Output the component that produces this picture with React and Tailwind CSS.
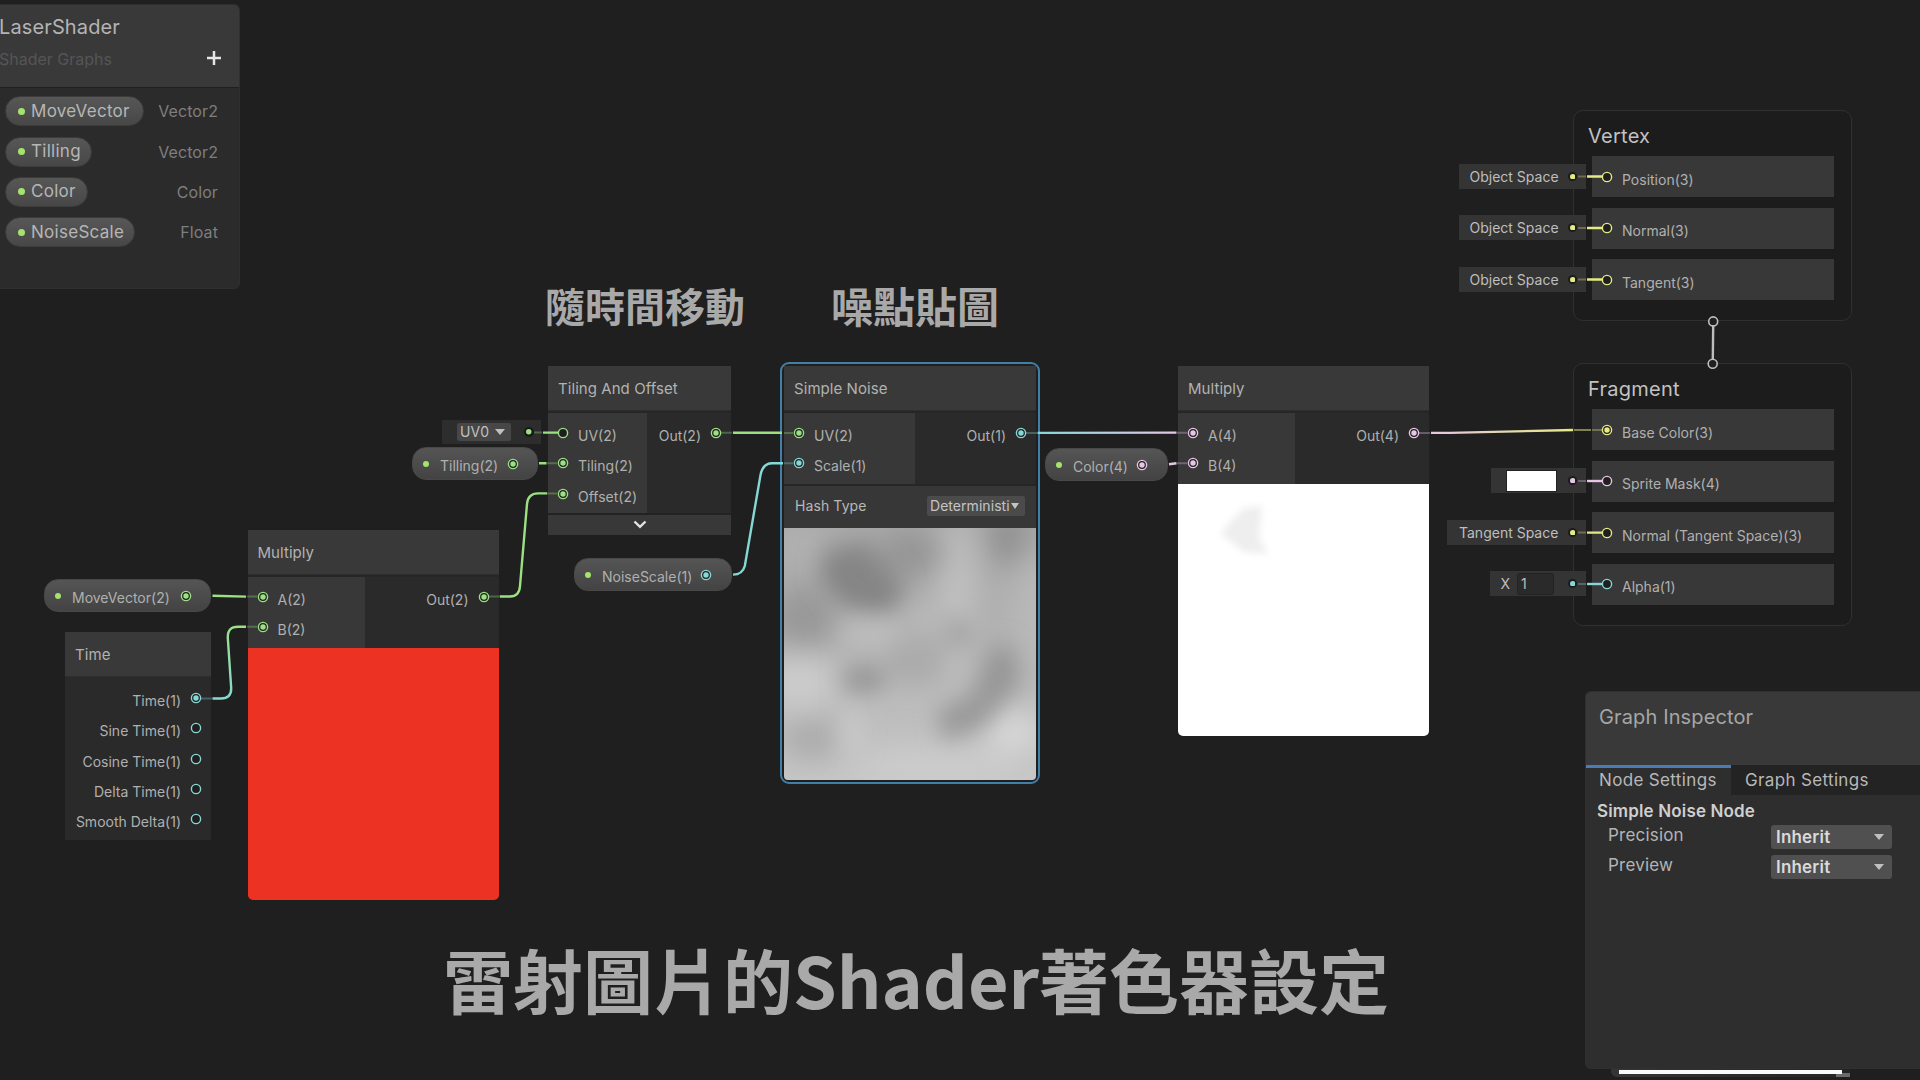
import React from 'react';

const GREEN = '#9be184';
const TEAL = '#86d8d6';
const PINK = '#e6c6e4';
const YELLOW = '#e5ea84';

const CJK = "font-['Noto_Sans_CJK_TC',sans-serif] font-bold whitespace-nowrap leading-none text-[#a9a9a9]";
const LABEL = 'whitespace-nowrap text-[14px] leading-none text-[#b0b0b0]';
const WIDGET_LABEL = 'whitespace-nowrap text-[14px] leading-none text-[#bebebe]';

function Port({ color, filled = true }) {
  return (
    <svg width="12" height="12" viewBox="0 0 12 12" className="shrink-0">
      <circle cx="6" cy="6" r="4.6" fill="#1f1f1f" stroke={color} strokeWidth="1.4" />
      {filled && <circle cx="6" cy="6" r="2.7" fill={color} />}
    </svg>
  );
}

function Dot({ color, size = 6 }) {
  return (
    <svg width={size} height={size} viewBox="0 0 6 6" className="shrink-0">
      <circle cx="3" cy="3" r="3" fill={color} />
    </svg>
  );
}

function Caret() {
  return (
    <svg width="10" height="6" viewBox="0 0 10 6" className="shrink-0">
      <path d="M0 0H10L5 6Z" fill="#c0c0c0" />
    </svg>
  );
}

function InRow({ color, filled, children }) {
  return (
    <div className="flex h-[30.25px] items-center gap-[9px] pl-[9px]">
      <Port color={color} filled={filled} />
      <span className={LABEL + ' pt-[6px]'}>{children}</span>
    </div>
  );
}

function OutRow({ color, filled, children }) {
  return (
    <div className="flex h-[30.25px] items-center justify-end gap-[9px] pr-[9px]">
      <span className={LABEL + ' pt-[6px]'}>{children}</span>
      <Port color={color} filled={filled} />
    </div>
  );
}

function NodeHeader({ children }) {
  return (
    <div className="flex h-[45px] items-center border-b border-[#2e2e2e] bg-[#393939] pl-[10px]">
      <span className="whitespace-nowrap text-[15px] leading-none tracking-[0.06px] text-[#b2b2b2]">{children}</span>
    </div>
  );
}

/* Input column on the left, outputs on the darker right-hand side */
function Ports({ leftClass, inputs, outputs }) {
  return (
    <div className="flex border-t-2 border-[#262626] bg-[#2a2a2a]">
      <div className={'bg-[#383838] pt-[5px] ' + leftClass}>{inputs}</div>
      <div className="flex-1 pt-[5px]">{outputs}</div>
    </div>
  );
}

function Pill({ className, color, children }) {
  return (
    <div
      className={
        'absolute flex h-[33px] items-center rounded-[14px] border border-[#484848] bg-linear-to-b from-[#555555] to-[#434343] pl-[10px] ' + className
      }
    >
      <Dot color="#a5e36c" />
      <span className={LABEL + ' ml-[11px] pt-[5px]'}>{children}</span>
      <span className="ml-auto flex">
        <Port color={color} />
      </span>
    </div>
  );
}

function BlackboardRow({ name, type, width }) {
  return (
    <div className="flex h-[40.35px] items-center justify-between pl-[5px] pr-[21px]">
      <div className={'flex h-[30px] items-center rounded-full border border-[#3c3c3c] bg-linear-to-b from-[#575757] to-[#474747] pl-[12px] ' + width}>
        <Dot color="#a5e36c" size={7} />
        <span className="ml-[6px] whitespace-nowrap text-[17px] leading-none tracking-[0.28px] text-[#b6b6b6]">{name}</span>
      </div>
      <span className="text-[16px] leading-none tracking-[0.1px] text-[#7e7e7e]">{type}</span>
    </div>
  );
}

function Blackboard() {
  return (
    <div className="absolute left-0 top-[4px] flex h-[285px] w-[240px] flex-col overflow-hidden rounded-r-[6px] border-y border-r border-[#2f2f2f] bg-[#2b2b2b]">
      <div className="flex h-[83px] justify-between border-b border-[#202020] bg-[#393939]">
        <div>
          <div className="ml-[-1px] mt-[12px] text-[20px] leading-none tracking-[0.12px] text-[#b4b4b4]">LaserShader</div>
          <div className="ml-[-1px] mt-[14px] text-[16px] leading-none text-[#555555]">Shader Graphs</div>
        </div>
        <svg width="14" height="14" viewBox="0 0 14 14" className="mr-[18px] mt-[46px]">
          <path d="M7 0V14M0 7H14" stroke="#e6e6e6" strokeWidth="2.5" />
        </svg>
      </div>
      <div className="flex flex-col pt-[3px]">
        <BlackboardRow name="MoveVector" type="Vector2" width="w-[139px]" />
        <BlackboardRow name="Tilling" type="Vector2" width="w-[87px]" />
        <BlackboardRow name="Color" type="Color" width="w-[83px]" />
        <BlackboardRow name="NoiseScale" type="Float" width="w-[130px]" />
      </div>
    </div>
  );
}

function TimeNode() {
  return (
    <div className="absolute left-[65px] top-[632px] h-[208px] w-[146px] bg-[#2a2a2a]">
      <NodeHeader>Time</NodeHeader>
      <div className="pt-[6px]">
        <OutRow color={TEAL}>Time(1)</OutRow>
        <OutRow color={TEAL} filled={false}>Sine Time(1)</OutRow>
        <OutRow color={TEAL} filled={false}>Cosine Time(1)</OutRow>
        <OutRow color={TEAL} filled={false}>Delta Time(1)</OutRow>
        <OutRow color={TEAL} filled={false}>Smooth Delta(1)</OutRow>
      </div>
    </div>
  );
}

function MultiplyNode({ className, dims, color, children }) {
  return (
    <div className={'absolute flex w-[251px] flex-col ' + className}>
      <NodeHeader>Multiply</NodeHeader>
      <Ports
        leftClass="w-[117px] pb-[5px]"
        inputs={
          <>
            <InRow color={color}>{'A(' + dims + ')'}</InRow>
            <InRow color={color}>{'B(' + dims + ')'}</InRow>
          </>
        }
        outputs={<OutRow color={color}>{'Out(' + dims + ')'}</OutRow>}
      />
      {children}
    </div>
  );
}

function TilingNode() {
  return (
    <div className="absolute left-[548px] top-[366px] flex w-[183px] flex-col">
      <NodeHeader>Tiling And Offset</NodeHeader>
      <Ports
        leftClass="w-[99px] pb-[4px]"
        inputs={
          <>
            <InRow color={GREEN} filled={false}>UV(2)</InRow>
            <InRow color={GREEN}>Tiling(2)</InRow>
            <InRow color={GREEN}>Offset(2)</InRow>
          </>
        }
        outputs={<OutRow color={GREEN}>Out(2)</OutRow>}
      />
      <div className="flex h-[22px] items-center justify-center border-t-2 border-[#232323] bg-[#383838]">
        <svg width="14" height="9" viewBox="0 0 14 9">
          <path d="M1.5 1.5L7 6.8L12.5 1.5" fill="none" stroke="#e4e4e4" strokeWidth="2.4" />
        </svg>
      </div>
    </div>
  );
}

function NoisePreview() {
  return (
    <svg width="252" height="252" viewBox="0 0 252 252" className="rounded-b-[4px]">
      <defs>
        <filter id="soft" x="-80%" y="-80%" width="260%" height="260%">
          <feGaussianBlur stdDeviation="11" />
        </filter>
        <filter id="softer" x="-60%" y="-60%" width="220%" height="220%">
          <feGaussianBlur stdDeviation="15" />
        </filter>
        <linearGradient id="noiseBase" x1="0" y1="0" x2="0" y2="1">
          <stop offset="0" stopColor="#a9a9a9" />
          <stop offset="0.45" stopColor="#b3b3b3" />
          <stop offset="1" stopColor="#c6c6c6" />
        </linearGradient>
      </defs>
      <rect width="252" height="252" fill="url(#noiseBase)" />
      <g filter="url(#softer)">
        <ellipse cx="172" cy="50" rx="18" ry="60" fill="#c2c2c2" />
        <ellipse cx="16" cy="154" rx="36" ry="30" fill="#cccccc" />
        <ellipse cx="20" cy="90" rx="34" ry="34" fill="#989898" />
        <ellipse cx="224" cy="10" rx="18" ry="28" fill="#8c8c8c" />
        <ellipse cx="128" cy="26" rx="36" ry="24" fill="#949494" />
        <ellipse cx="250" cy="80" rx="12" ry="60" fill="#bebebe" />
        <ellipse cx="230" cy="204" rx="30" ry="22" fill="#d8d8d8" />
        <ellipse cx="150" cy="240" rx="80" ry="16" fill="#cecece" />
        <ellipse cx="28" cy="210" rx="30" ry="20" fill="#a9a9a9" />
        <ellipse cx="18" cy="14" rx="22" ry="16" fill="#b4b4b4" />
      </g>
      <g filter="url(#soft)">
        <path d="M38 22L80 12L112 40L122 66L104 84L62 80L36 58Z" fill="#898989" />
        <ellipse cx="66" cy="46" rx="20" ry="16" fill="#848484" />
        <ellipse cx="88" cy="70" rx="24" ry="10" fill="#828282" />
        <ellipse cx="86" cy="106" rx="32" ry="11" fill="#bfbfbf" />
        <ellipse cx="142" cy="92" rx="20" ry="9" fill="#bababa" />
        <ellipse cx="80" cy="151" rx="22" ry="13" fill="#949494" />
        <ellipse cx="130" cy="132" rx="30" ry="24" fill="#acacac" />
        <ellipse cx="174" cy="104" rx="14" ry="12" fill="#a2a2a2" />
        <path d="M196 140L214 112L232 124L236 156L196 200L160 212L152 184L188 166Z" fill="#999999" />
        <ellipse cx="220" cy="144" rx="12" ry="18" fill="#969696" />
        <ellipse cx="68" cy="204" rx="10" ry="24" fill="#cacaca" />
        <ellipse cx="174" cy="142" rx="12" ry="16" fill="#bcbcbc" />
      </g>
    </svg>
  );
}

function SimpleNoiseNode() {
  return (
    <div className="absolute left-[780px] top-[362px] flex h-[422px] w-[260px] flex-col rounded-[9px] border-2 border-[#417fa8] p-[2px]">
      <NodeHeader>Simple Noise</NodeHeader>
      <Ports
        leftClass="w-[131px] pb-[5px]"
        inputs={
          <>
            <InRow color={GREEN}>UV(2)</InRow>
            <InRow color={TEAL}>Scale(1)</InRow>
          </>
        }
        outputs={<OutRow color={TEAL}>Out(1)</OutRow>}
      />
      <div className="flex h-[44px] shrink-0 items-center justify-between border-t-2 border-[#262626] bg-[#373737] pb-[2px] pl-[11px] pr-[11px]">
        <span className="whitespace-nowrap text-[14px] leading-none tracking-[0.1px] text-[#b8b8b8]">Hash Type</span>
        <span className="flex h-[20px] w-[98px] items-center rounded-[2px] bg-[#4b4b4b] pl-[3px]">
          <span className="whitespace-nowrap text-[14px] leading-none tracking-[0.05px] text-[#c4c4c4]">Deterministi</span>
          <svg width="8" height="6" viewBox="0 0 8 6" className="ml-[1px]">
            <path d="M0 0H8L4 6Z" fill="#c4c4c4" />
          </svg>
        </span>
      </div>
      <NoisePreview />
    </div>
  );
}

/* Inline default-value widget docked at the left of an input */
function Widget({ className, color, children }) {
  return (
    <div className={'absolute flex h-[25px] items-center bg-[#343434] pr-[9px] ' + className}>
      {children}
      <span className="ml-auto flex size-[9px] items-center justify-center rounded-full bg-[#1c1c1c]">
        <Dot color={color} size={5.5} />
      </span>
    </div>
  );
}

function Block({ color, filled = false, children }) {
  return (
    <div className="flex h-[41px] items-center bg-[#383838] pl-[9px]">
      <Port color={color} filled={filled} />
      <span className={LABEL + ' ml-[9px] pt-[6px]'}>{children}</span>
    </div>
  );
}

function Context({ className, title, children }) {
  return (
    <div className={'absolute left-[1573px] w-[279px] rounded-[10px] border-[1.5px] border-[#303030] bg-[#1c1c1c] pl-[18px] pr-[17px] ' + className}>
      <div className="ml-[-4px] mt-[15px] text-[20px] leading-none tracking-[0.25px] text-[#c2c2c2]">{title}</div>
      <div className="mt-[10px] flex flex-col gap-[10.5px]">{children}</div>
    </div>
  );
}

function InspectorRow({ label }) {
  return (
    <div className="flex h-[30.3px] items-start justify-between pl-[22px] pr-[28px]">
      <span className="pt-[2px] text-[17px] leading-none tracking-[0.2px] text-[#b4b4b4]">{label}</span>
      <span className="flex h-[24px] w-[121px] items-center justify-between rounded-[3px] bg-[#505050] pl-[5px] pr-[8px]">
        <span className="text-[17px] font-semibold leading-none tracking-[0.2px] text-[#dadada]">Inherit</span>
        <Caret />
      </span>
    </div>
  );
}

function Inspector() {
  return (
    <>
      <div className="absolute left-[1611px] top-[1064px] flex h-[13px] w-[239px] items-end rounded-bl-[6px] bg-linear-to-r from-[#353535] to-[#242424] pl-[8px]">
        <div className="mb-[3px] h-[4px] w-[217px] bg-[#fafafa]" />
        <div className="h-[7px] w-[6px] border-b-[3px] border-[#6a6a6a] bg-[#fafafa]" />
        <div className="h-[4px] w-[8px] bg-[#6a6a6a]" />
      </div>
      <div className="absolute left-[1585px] top-[691px] flex h-[378px] w-[335px] flex-col overflow-hidden rounded-l-[6px] border-y border-l border-[#303030] bg-[#2e2e2e]">
        <div className="h-[73px] bg-[#393939] pl-[13px] pt-[15px] text-[20px] leading-none tracking-[0.13px] text-[#a6a6a6]">
          Graph Inspector
        </div>
        <div className="flex h-[30px] bg-[#232323] text-[17px] leading-none tracking-[0.35px] text-[#b8b8b8]">
          <div className="w-[145px] whitespace-nowrap border-t-[3px] border-[#4a7cb8] bg-[#2e2e2e] pl-[13px] pt-[4px]">Node Settings</div>
          <div className="whitespace-nowrap pl-[14px] pt-[7px]">Graph Settings</div>
        </div>
        <div className="pl-[11px] pt-[8px] text-[17px] font-semibold leading-none tracking-[0.15px] text-[#cfcfcf]">Simple Noise Node</div>
        <div className="flex flex-col pt-[5px]">
          <InspectorRow label="Precision" />
          <InspectorRow label="Preview" />
        </div>
      </div>
    </>
  );
}

function Wires() {
  return (
    <svg width="1920" height="1080" viewBox="0 0 1920 1080" className="pointer-events-none absolute inset-0" fill="none" strokeWidth="2.4">
      <defs>
        <linearGradient id="timeWire" gradientUnits="userSpaceOnUse" x1="212" y1="698" x2="246" y2="627">
          <stop offset="0" stopColor={TEAL} />
          <stop offset="1" stopColor={GREEN} />
        </linearGradient>
        <linearGradient id="noiseWire" gradientUnits="userSpaceOnUse" x1="1038" y1="0" x2="1177" y2="0">
          <stop offset="0" stopColor={TEAL} />
          <stop offset="1" stopColor={PINK} />
        </linearGradient>
        <linearGradient id="outWire" gradientUnits="userSpaceOnUse" x1="1431" y1="0" x2="1573" y2="0">
          <stop offset="0" stopColor={PINK} />
          <stop offset="1" stopColor={YELLOW} />
        </linearGradient>
      </defs>

      <path d="M212.5 595.8L246 596.6" stroke={GREEN} />
      <path d="M212.5 698.5H221Q231.5 698.5 231.2 688L227.8 638Q227.3 626.7 238 626.7H246" stroke="url(#timeWire)" />
      <path d="M500 596.5H510Q519.3 596.5 520 586L527 504Q528 493.4 538 493.4H547" stroke={GREEN} />
      <path d="M543 432.6H558M539 463.2H546.5M733 432.7H782" stroke={GREEN} />
      <path d="M733 574.6Q742.5 574.6 744.8 566L760.5 475Q763 463.3 772 463.3H783" stroke={TEAL} />
      <path d="M1037.5 432.9L1176.5 432.6" stroke="url(#noiseWire)" />
      <path d="M1169 464.3L1176.5 463.2" stroke={PINK} />
      <path d="M1431 432.9L1450 432.9L1573 430" stroke="url(#outWire)" />
      <path d="M1587 176.5H1602M1587 228H1602M1587 279.5H1602M1587 532.6H1602" stroke={YELLOW} />
      <path d="M1587 481H1602" stroke={PINK} />
      <path d="M1587 584H1602" stroke={TEAL} />

      <g opacity="0.32" strokeWidth="2">
        <path d="M247 596.6H257M247 626.7H257M489 596.5H500M547 493.4H557M547 463.2H557M534 432.6H542M721 432.7H732M784 432.9H793" stroke={GREEN} />
        <path d="M201 698.5H212M784 463.3H793M1026 432.9H1037M1578 584H1586" stroke={TEAL} />
        <path d="M1177 432.7H1187M1177 463.2H1187M1419 432.9H1430M1578 481H1586" stroke={PINK} />
        <path d="M1578 176.5H1586M1578 228H1586M1578 279.5H1586M1578 532.6H1586M1592 430H1602" stroke={YELLOW} />
      </g>
      <path d="M1574 430H1591" stroke={YELLOW} strokeWidth="2" opacity="0.5" />

      <g stroke="#bdbdbd">
        <path d="M1713.2 326L1712.8 359" />
        <circle cx="1713.2" cy="321.4" r="4.5" strokeWidth="1.6" fill="#1f1f1f" />
        <circle cx="1712.7" cy="363.7" r="4.5" strokeWidth="1.6" fill="#1f1f1f" />
      </g>
    </svg>
  );
}

export default function App() {
  return (
    <div className="relative h-[1080px] w-[1920px] overflow-hidden bg-[#1f1f1f] font-[Inter,sans-serif]">
      <Blackboard />

      <div className={CJK + ' absolute left-[545px] top-[285px] text-[40px]'}>隨時間移動</div>
      <div className={CJK + ' absolute left-[831px] top-[284px] text-[42px]'}>噪點貼圖</div>
      <div className={CJK + ' absolute left-[443px] top-[944px] text-[70px]'}>雷射圖片的Shader著色器設定</div>

      <Pill className="left-[44px] top-[579px] w-[167px] pr-[18px]" color={GREEN}>MoveVector(2)</Pill>
      <TimeNode />
      <MultiplyNode className="left-[247.5px] top-[530px]" dims="2" color={GREEN}>
        <div className="h-[252px] rounded-b-[5px] bg-[#ec3223]" />
      </MultiplyNode>

      <div className="absolute left-[442px] top-[420px] flex h-[24px] w-[99px] items-center bg-[#2d2d2d] pl-[15px] pr-[7px]">
        <span className="flex h-[18px] w-[54px] items-center justify-between rounded-[2px] bg-[#474747] pl-[3px] pr-[6px]">
          <span className="text-[14px] leading-none tracking-[0.2px] text-[#c0c0c0]">UV0</span>
          <Caret />
        </span>
        <span className="ml-auto flex size-[10px] items-center justify-center rounded-full bg-[#181818]">
          <Dot color={GREEN} size={5.5} />
        </span>
      </div>
      <Pill className="left-[412px] top-[447px] w-[126px] pr-[18px]" color={GREEN}>Tilling(2)</Pill>
      <TilingNode />

      <Pill className="left-[574px] top-[558px] w-[158px] pr-[19px]" color={TEAL}>NoiseScale(1)</Pill>
      <SimpleNoiseNode />

      <Pill className="left-[1045px] top-[448px] w-[123px] pr-[19px]" color={PINK}>Color(4)</Pill>
      <MultiplyNode className="left-[1178px] top-[366px]" dims="4" color={PINK}>
        <svg width="251" height="252" viewBox="0 0 251 252" className="rounded-b-[5px] bg-white">
          <defs>
            <filter id="smudge" x="-40%" y="-40%" width="180%" height="180%">
              <feGaussianBlur stdDeviation="3.5" />
            </filter>
          </defs>
          <path d="M66 24L84 22L81 54L90 70L66 68L43 50L52 38Z" fill="#eeeeee" filter="url(#smudge)" />
        </svg>
      </MultiplyNode>

      <Context className="top-[110px] h-[211px]" title="Vertex">
        <Block color={YELLOW}>Position(3)</Block>
        <Block color={YELLOW}>Normal(3)</Block>
        <Block color={YELLOW}>Tangent(3)</Block>
      </Context>
      <Context className="top-[363px] h-[263px]" title="Fragment">
        <Block color={YELLOW} filled>Base Color(3)</Block>
        <Block color={PINK}>Sprite Mask(4)</Block>
        <Block color={YELLOW}>Normal (Tangent Space)(3)</Block>
        <Block color={TEAL}>Alpha(1)</Block>
      </Context>

      <Widget className="left-[1459px] top-[164px] w-[127px] pl-[10.5px]" color={YELLOW}>
        <span className={WIDGET_LABEL}>Object Space</span>
      </Widget>
      <Widget className="left-[1459px] top-[215px] w-[127px] pl-[10.5px]" color={YELLOW}>
        <span className={WIDGET_LABEL}>Object Space</span>
      </Widget>
      <Widget className="left-[1459px] top-[267px] w-[127px] pl-[10.5px]" color={YELLOW}>
        <span className={WIDGET_LABEL}>Object Space</span>
      </Widget>
      <Widget className="left-[1491px] top-[468px] w-[95px] pl-[15px]" color={PINK}>
        <span className="h-[22px] w-[51px] border border-[#222222] bg-white" />
      </Widget>
      <Widget className="left-[1447px] top-[520px] w-[139px] pl-[12px]" color={YELLOW}>
        <span className={WIDGET_LABEL}>Tangent Space</span>
      </Widget>
      <Widget className="left-[1490px] top-[571px] w-[96px] pl-[10.5px]" color={TEAL}>
        <span className={WIDGET_LABEL}>X</span>
        <span className="ml-[7px] flex h-[22px] w-[37px] items-center rounded-[3px] border border-[#222222] bg-[#2a2a2a] pl-[3px]">
          <span className={WIDGET_LABEL}>1</span>
        </span>
      </Widget>

      <Wires />
      <Inspector />
    </div>
  );
}
